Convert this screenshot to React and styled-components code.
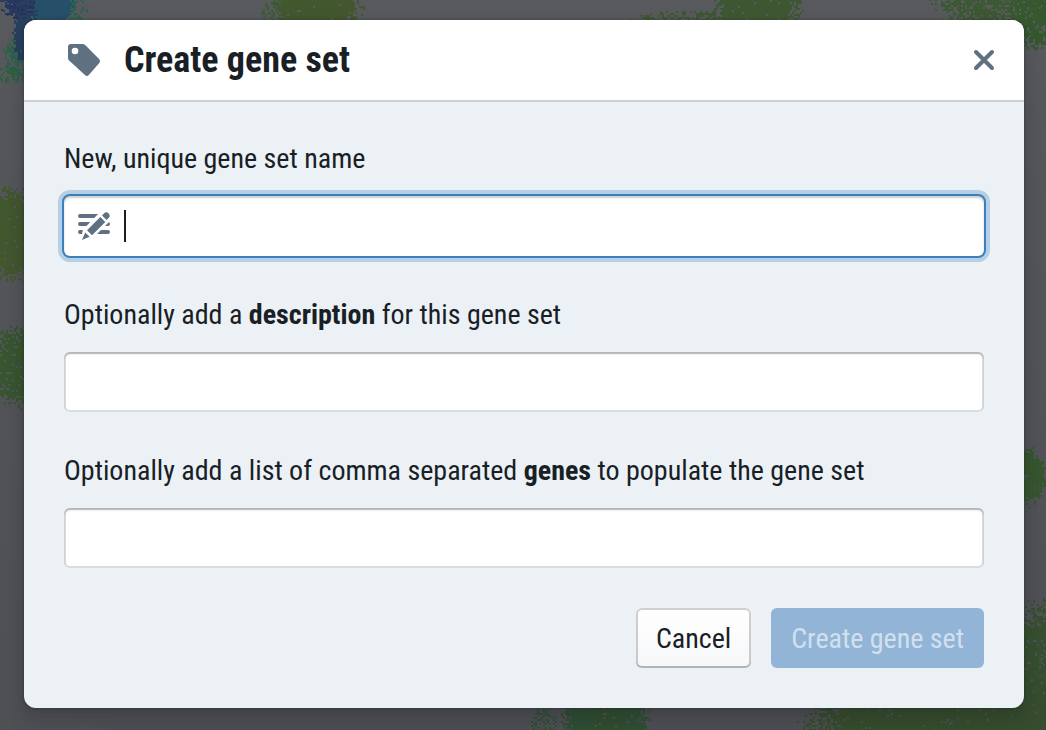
import React, { useState } from "react";
import styled, { createGlobalStyle } from "styled-components";

const Global = createGlobalStyle`
  *, *::before, *::after { box-sizing: border-box; }
  body {
    margin: 0;
    background: linear-gradient(#595b5e, #515256);
    color: #182026;
    font-family: "Roboto Condensed", "Liberation Sans Narrow", Roboto, sans-serif;
    font-size: 28px;
    line-height: 38px;
  }
`;

const CLUSTERS = [
  { cx: 52, cy: 8, rx: 32, ry: 30, fill: "#2c6150", sparse: 0.5 },
  { cx: 20, cy: 56, rx: 16, ry: 22, fill: "#2c6150", sparse: 0.7 },
  { cx: 6, cy: 74, rx: 16, ry: 9, fill: "#2f6340", sparse: 0.5 },
  { cx: 32, cy: 0, rx: 30, ry: 20, fill: "#28415f" },
  { cx: 52, cy: 6, rx: 20, ry: 18, fill: "#27506a" },
  { cx: 22, cy: 34, rx: 9, ry: 26, fill: "#28415f" },
  { cx: 18, cy: 4, rx: 16, ry: 14, fill: "#28345f", sparse: 0.5 },
  { cx: 316, cy: 2, rx: 42, ry: 44, fill: "#44592f" },
  { cx: 276, cy: 10, rx: 16, ry: 14, fill: "#3f5c37", sparse: 0.4 },
  { cx: 757, cy: 0, rx: 42, ry: 40, fill: "#3f5933" },
  { cx: 690, cy: 20, rx: 60, ry: 10, fill: "#3f5933", sparse: 0.5 },
  { cx: 1004, cy: -6, rx: 70, ry: 36, fill: "#3d5a34", sparse: 0.85 },
  { cx: 1040, cy: 10, rx: 30, ry: 36, fill: "#36592f", sparse: 0.85 },
  { cx: 14, cy: 234, rx: 46, ry: 44, fill: "#445a30" },
  { cx: 20, cy: 366, rx: 38, ry: 38, fill: "#395830", sparse: 0.9 },
  { cx: 1024, cy: 476, rx: 21, ry: 28, fill: "#38582f" },
  { cx: 1046, cy: 690, rx: 50, ry: 84, fill: "#395230", sparse: 0.95 },
  { cx: 950, cy: 724, rx: 136, ry: 62, fill: "#384f2f" },
  { cx: 605, cy: 716, rx: 40, ry: 50, fill: "#32502f" },
  { cx: 580, cy: 712, rx: 14, ry: 30, fill: "#2f523c", sparse: 0.5 },
  { cx: 634, cy: 712, rx: 10, ry: 30, fill: "#2f523c", sparse: 0.5 },
  { cx: 543, cy: 724, rx: 12, ry: 16, fill: "#33523a", sparse: 0.5 },
];

function makeDots({ cx, cy, rx, ry, sparse = 1 }, seed) {
  let s = seed * 7919 + 17;
  const rnd = () => {
    s = (s * 1664525 + 1013904223) % 4294967296;
    return s / 4294967296;
  };
  let d = "";
  for (let y = Math.floor(cy - ry * 1.3); y < cy + ry * 1.3; y += 2) {
    for (let x = Math.floor(cx - rx * 1.3); x < cx + rx * 1.3; x += 2) {
      const r = Math.hypot((x - cx) / rx, (y - cy) / ry);
      const p = Math.min(0.97, Math.max(0, (1.15 - r) * 2.6)) * sparse;
      if (rnd() < p) d += `M${x} ${y}h2v2h-2z`;
    }
  }
  return d;
}

const PLOT = CLUSTERS.map((c, i) => ({ fill: c.fill, d: makeDots(c, i + 1) }));

const Page = styled.main`
  position: relative;
  display: grid;
  min-height: 100vh;
  padding: 20px 22px 22px 24px;
  overflow: hidden;
`;

const Plot = styled.svg`
  position: absolute;
  inset: 0;
  width: 100%;
  height: 100%;
`;

const Dialog = styled.section`
  position: relative;
  display: flex;
  flex-direction: column;
  border-radius: 12px;
  background: #ebf1f5;
  box-shadow: 0 0 0 2px rgba(16, 22, 26, 0.1), 0 8px 16px rgba(16, 22, 26, 0.2),
    0 36px 92px rgba(16, 22, 26, 0.1);
`;

const Header = styled.header`
  display: flex;
  align-items: center;
  height: 80px;
  padding: 0 10px 0 40px;
  border-radius: 12px 12px 0 0;
  background: #fff;
  box-shadow: 0 2px 0 rgba(16, 22, 26, 0.15);
`;

const Icon = styled.svg`
  flex: none;
  width: 40px;
  height: 40px;
  fill: #5f7081;
`;

const Title = styled.h1`
  flex: 1;
  margin: 0 0 0 20px;
  font-size: 36px;
  line-height: 44px;
  font-weight: 700;
`;

const CloseButton = styled.button`
  display: grid;
  place-items: center;
  width: 60px;
  height: 60px;
  padding: 0;
  border: 0;
  background: none;
  cursor: pointer;
`;

const Form = styled.form`
  display: flex;
  flex-direction: column;
  gap: 40px;
  padding: 40px;
`;

const Field = styled.div`
  display: flex;
  flex-direction: column;
  gap: 18px;
`;

const InputGroup = styled.div`
  position: relative;
  display: grid;
`;

const LeftIcon = styled(Icon)`
  position: absolute;
  left: 10px;
  top: 10px;
  pointer-events: none;
`;

const Caret = styled.span`
  position: absolute;
  left: 60px;
  top: 14px;
  width: 2px;
  height: 32px;
  background: #182026;
  pointer-events: none;
`;

const TextInput = styled.input`
  width: 100%;
  height: 60px;
  padding: 0 20px 0 ${(p) => (p.$icon ? 60 : 20)}px;
  border: 0;
  border-radius: 6px;
  outline: none;
  background: #fff;
  color: inherit;
  font: inherit;
  caret-color: ${(p) => (p.$icon && !p.value ? "transparent" : "#182026")};
  box-shadow: ${(p) =>
    p.$active
      ? "0 0 0 2px #3a80bd, 0 0 0 6px rgba(58, 128, 189, 0.3), inset 0 2px 2px rgba(16, 22, 26, 0.2)"
      : "inset 0 0 0 2px rgba(16, 22, 26, 0.15), inset 0 2px 2px rgba(16, 22, 26, 0.2)"};
`;

const Actions = styled.div`
  display: flex;
  justify-content: flex-end;
  gap: 20px;
`;

const Button = styled.button`
  height: 60px;
  padding: 2px 20px 0;
  border: 0;
  border-radius: 6px;
  font: inherit;
  color: ${(p) => (p.$primary ? "rgba(255, 255, 255, 0.6)" : "#182026")};
  background: ${(p) => (p.$primary ? "#92b5d7" : "linear-gradient(#fff, #f6f7f9)")};
  box-shadow: ${(p) =>
    p.$primary
      ? "none"
      : "inset 0 0 0 2px rgba(16, 22, 26, 0.2), inset 0 -2px 0 rgba(16, 22, 26, 0.12)"};
`;

export default function App() {
  const [name, setName] = useState("");
  return (
    <>
      <Global />
      <Page>
        <Plot viewBox="0 0 1046 730" preserveAspectRatio="xMidYMid slice" aria-hidden="true">
          {PLOT.map((c, i) => (
            <path key={i} d={c.d} fill={c.fill} />
          ))}
        </Plot>
        <Dialog role="dialog" aria-labelledby="dialog-title">
          <Header>
            <Icon viewBox="0 0 40 40" aria-hidden="true">
              <path
                fillRule="evenodd"
                d="M7 4H18.500Q20 4 21.200 5.100L35.300 19.200Q37 21 35.300 22.900L24.800 35.100Q23 37 21.200 35.300L5.100 20.500Q4 19.500 4 18V7Q4 4 7 4zM11 7.700a3.300 3.300 0 1 0 0 6.600a3.300 3.300 0 1 0 0-6.600z"
              />
            </Icon>
            <Title id="dialog-title">Create gene set</Title>
            <CloseButton type="button" aria-label="Close">
              <Icon viewBox="0 0 40 40" aria-hidden="true">
                <path d="M12 12L28 28M28 12L12 28" stroke="#5f7081" strokeWidth="4" strokeLinecap="round" />
              </Icon>
            </CloseButton>
          </Header>
          <Form onSubmit={(e) => e.preventDefault()}>
            <Field>
              <label htmlFor="set-name">New, unique gene set name</label>
              <InputGroup>
                <TextInput
                  id="set-name"
                  $icon
                  $active
                  autoComplete="off"
                  value={name}
                  onChange={(e) => setName(e.target.value)}
                />
                <LeftIcon viewBox="0 0 40 40" aria-hidden="true">
                  <path
                    d="M6 10H25M6 18H18M6 26H9M24 26H34M31 18H34"
                    stroke="#5f7081"
                    strokeWidth="4"
                    strokeLinecap="round"
                  />
                  <path d="M6 36L9 23.500L27 5Q32 2 36 6Q39 11 36 15L18 33Z" fill="#fff" />
                  <path d="M8 34l3.200-7.600l4.400 4.300zM13 24.300L26.300 11l5 5L18 29.300zM28 9.400l2.400-2.300q2.200-1.800 4.400.4q1.800 2.200 0 4.200l-2.200 2.300z" />
                </LeftIcon>
                {!name && <Caret />}
              </InputGroup>
            </Field>
            <Field>
              <label htmlFor="set-description">
                Optionally add a <b>description</b> for this gene set
              </label>
              <TextInput id="set-description" />
            </Field>
            <Field>
              <label htmlFor="set-genes">
                Optionally add a list of comma separated <b>genes</b> to populate the gene set
              </label>
              <TextInput id="set-genes" />
            </Field>
            <Actions>
              <Button type="button">Cancel</Button>
              <Button type="submit" $primary disabled>
                Create gene set
              </Button>
            </Actions>
          </Form>
        </Dialog>
      </Page>
    </>
  );
}
